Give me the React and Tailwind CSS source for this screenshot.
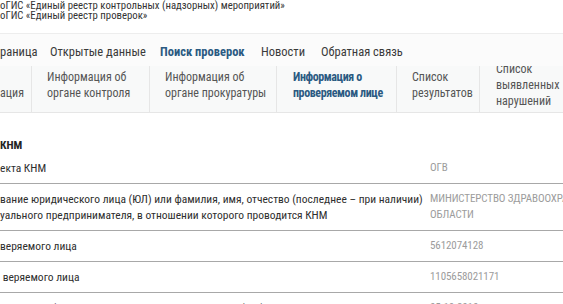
export default function App() {
  const rows = [
    { label: ["екта КНМ"], value: ["ОГВ"] },
    {
      label: [
        "вание юридического лица (ЮЛ) или фамилия, имя, отчество (последнее – при наличии)",
        "уального предпринимателя, в отношении которого проводится КНМ",
      ],
      value: ["МИНИСТЕРСТВО ЗДРАВООХРАНЕНИЯ ОРЕНБУРГСКОЙ", "ОБЛАСТИ"],
    },
    { label: ["веряемого лица"], value: ["5612074128"] },
    { label: ["\u00a0веряемого лица"], value: ["1105658021171"] },
    { label: ["\u00a0\u00a0\u00a0\u00a0\u00a0\u00a0\u00a0\u00a0\u00a0ОГРН (дата регистрации юридического лица (ЮЛ)"], value: ["05.10.2010"] },
  ];
  return (
    <div className="w-[563px] h-[304px] overflow-hidden bg-white font-['Roboto_Condensed',Roboto,sans-serif] text-[#333]">
      <div className="pt-[1px] h-[33px] text-[10.75px] leading-[9.5px] text-[#333] whitespace-nowrap">
        <div>оГИС «Единый реестр контрольных (надзорных) мероприятий»</div>
        <div>оГИС «Единый реестр проверок»</div>
      </div>
      <div className="h-[33px] pt-[4px] border-t border-[#ededed] bg-[#fbfbfb] flex items-center text-[12.5px] text-[#3a3a3a] whitespace-nowrap">
        <span className="w-[50px] shrink-0">раница</span>
        <span className="w-[110px] shrink-0">Открытые данные</span>
        <span className="w-[101px] shrink-0 font-bold text-[#2b5a82]">Поиск проверок</span>
        <span className="w-[60px] shrink-0">Новости</span>
        <span>Обратная связь</span>
      </div>
      <div className="h-[47px] pb-[9px] bg-[#f8f9f9] border-b border-[#e6e6e6] flex overflow-hidden text-[12px] leading-[16px] text-[#555] whitespace-nowrap">
        <div className="w-[32px] shrink-0 flex items-center border-r border-[#e6e6e6] -mb-[9px] pb-[9px]">
          <div>
            <div>&nbsp;</div>
            <div>ация</div>
          </div>
        </div>
        <div className="w-[118px] shrink-0 pl-[15px] flex items-center border-r border-[#e6e6e6] -mb-[9px] pb-[9px]">
          <div>
            <div>Информация об</div>
            <div>органе контроля</div>
          </div>
        </div>
        <div className="w-[127px] shrink-0 pl-[15px] flex items-center border-r border-[#e6e6e6] -mb-[9px] pb-[9px]">
          <div>
            <div>Информация об</div>
            <div>органе прокуратуры</div>
          </div>
        </div>
        <div className="w-[120px] shrink-0 pl-[16px] flex items-center border-r border-[#e6e6e6] -mb-[9px] pb-[9px] font-bold tracking-[-0.4px] text-[#2b5a82]">
          <div>
            <div>Информация о</div>
            <div>проверяемом лице</div>
          </div>
        </div>
        <div className="w-[83px] shrink-0 pl-[15px] flex items-center border-r border-[#e6e6e6] -mb-[9px] pb-[9px]">
          <div>
            <div>Список</div>
            <div>результатов</div>
          </div>
        </div>
        <div className="flex-1 pl-[16px] flex items-center -mb-[9px] pb-[9px]">
          <div>
            <div>Список</div>
            <div>выявленных</div>
            <div>нарушений</div>
          </div>
        </div>
      </div>
      <div className="pt-[25px] text-[11.5px] leading-[16px] whitespace-nowrap">
        <div className="font-bold text-[#222] leading-[15px]">КНМ</div>
        {rows.map((r, i) => (
          <div key={i} className="flex py-[7px] border-b border-[#a8a8a8]">
            <div className="w-[430px] shrink-0 text-[#2e2e2e]">
              {r.label.map((l, j) => (
                <div key={j}>{l}</div>
              ))}
            </div>
            <div className="flex-1 overflow-hidden text-[11px] tracking-[-0.1px] text-[#9c9c9c]">
              {r.value.map((v, j) => (
                <div key={j}>{v}</div>
              ))}
            </div>
          </div>
        ))}
      </div>
    </div>
  );
}
